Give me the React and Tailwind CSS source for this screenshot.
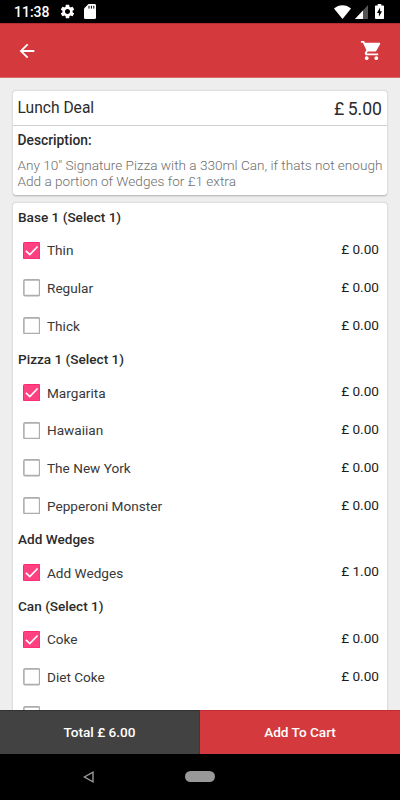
import React, { useState } from 'react';
import { MdArrowBack, MdSettings, MdShoppingCart } from 'react-icons/md';

const groups = [
  { title: 'Base 1 (Select 1)', items: [['Thin', 0], ['Regular', 0], ['Thick', 0]] },
  { title: 'Pizza 1 (Select 1)', items: [['Margarita', 0], ['Hawaiian', 0], ['The New York', 0], ['Pepperoni Monster', 0]] },
  { title: 'Add Wedges', items: [['Add Wedges', 1]] },
  { title: 'Can (Select 1)', items: [['Coke', 0], ['Diet Coke', 0], ['Fanta', 0]] },
];

const StatusBar = () => (
  <div className="h-[23px] shrink-0 bg-black text-white flex items-center pl-[14px] pr-[16px]">
    <span className="w-[45px] text-[14px] leading-none font-medium mt-[1px]">11:38</span>
    <MdSettings className="w-[17px] h-[17px]" />
    <svg className="w-[12px] h-[15px] ml-[8px]" viewBox="0 0 12 15">
      <path fill="white" d="M4.5 0H10.6Q12 0 12 1.4V13.4Q12 15 10.6 15H1.4Q0 15 0 13.4V4.5Z" />
      <path stroke="black" strokeWidth="1" d="M5 1.8V4.6M7.4 1.8V4.6M9.8 1.8V4.6" />
    </svg>
    <div className="ml-auto flex items-center">
      <svg className="w-[17px] h-[14px]" viewBox="0 0 18 14" preserveAspectRatio="none">
        <path fill="white" d="M0 3.5C5-1 13-1 18 3.5L9 14Z" />
      </svg>
      <svg className="w-[13px] h-[14px] ml-[4px] mt-[1px]" viewBox="0 0 13 14">
        <path fill="#555555" d="M13 0V14H0Z" />
        <path fill="white" d="M8 5.4V14H0Z" />
      </svg>
      <svg className="w-[9px] h-[15px] ml-[7px]" viewBox="0 0 9 15">
        <path fill="white" d="M2.7 0H6.3V1.4H8.2Q9 1.4 9 2.3V14.1Q9 15 8.2 15H.8Q0 15 0 14.1V2.3Q0 1.4 .8 1.4H2.7Z" />
        <path fill="black" d="M5.1 3.6V7.2H7L3.9 12.7V9H2Z" />
      </svg>
    </div>
  </div>
);

const Checkbox = ({ checked }) => (
  <svg className="w-[17.5px] h-[17.5px] shrink-0" viewBox="0 0 18 18" fill="none">
    {checked ? (
      <>
        <rect x=".5" y=".5" width="17" height="17" rx="1" fill="#ff4081" stroke="#ff1f73" />
        <path d="M3 9.2L7 13L15 4.6" stroke="white" strokeWidth="1.7" />
      </>
    ) : (
      <rect x=".9" y=".9" width="16.2" height="16.2" rx="1.2" stroke="#adadad" strokeWidth="1.6" />
    )}
  </svg>
);

const App = () => {
  const [selected, setSelected] = useState(['0-0', '1-0', '2-0', '3-0']);

  const toggle = (id) => {
    setSelected((prev) => (prev.includes(id) ? prev.filter((s) => s !== id) : [...prev, id]));
  };

  return (
    <div className="w-[400px] h-[800px] bg-[#eeeeee] flex flex-col overflow-hidden font-['Roboto',sans-serif] text-[#2b2b2b]">
      <StatusBar />

      {/* App bar */}
      <div className="h-[55px] shrink-0 bg-[#d43a3d] border-t border-b border-t-[#b52d31] border-b-[#d96a6c] flex items-center justify-between pl-[16px] pr-[17px] text-white">
        <MdArrowBack className="w-[22px] h-[22px]" />
        <MdShoppingCart className="w-[23px] h-[23px]" />
      </div>

      <div className="flex-1 min-h-0 overflow-hidden px-[13px] pt-[13px]">
        {/* Deal summary */}
        <div className="h-[104px] bg-white rounded-[3px] shadow-[0_0.5px_2px_rgba(0,0,0,0.28)] mb-[8px]">
          <div className="h-[35px] border-b border-[#d0d0d0] flex items-center justify-between pl-[4.5px] pr-[5px]">
            <span className="text-[15.6px] mt-[1px]">Lunch Deal</span>
            <span className="text-[17.6px] mt-[2px] [word-spacing:-1px]">£ 5.00</span>
          </div>
          <div className="pl-[4.5px] pt-[4px]">
            <p className="text-[13.8px] leading-[20px] font-medium">Description:</p>
            <p className="text-[13.6px] leading-[16px] font-light text-[#6e6e6e] mt-[7px] whitespace-nowrap">
              Any 10" Signature Pizza with a 330ml Can, if thats not enough
              <br />
              Add a portion of Wedges for £1 extra
            </p>
          </div>
        </div>

        {/* Options */}
        <div className="bg-white rounded-[3px] shadow-[0_0.5px_2px_rgba(0,0,0,0.28)]">
          {groups.map((group, g) => (
            <div key={group.title}>
              <h3 className="h-[29.2px] flex items-center pb-[1px] pl-[5px] text-[13.6px] font-medium">{group.title}</h3>
              {group.items.map(([name, price], i) => (
                <button
                  key={name}
                  onClick={() => toggle(`${g}-${i}`)}
                  className="w-full h-[37.7px] flex items-center pb-[1.4px] pl-[9.5px] pr-[8px] text-[13.6px] text-left">
                  <Checkbox checked={selected.includes(`${g}-${i}`)} />
                  <span className="ml-[7px] mt-[0.4px] text-[#383838]">{name}</span>
                  <span className="ml-auto -mt-[1.8px] text-[#1c1c1c]">£ {price.toFixed(2)}</span>
                </button>
              ))}
            </div>
          ))}
        </div>
      </div>

      {/* Bottom actions */}
      <div className="h-[44px] shrink-0 flex text-[13.6px] font-medium text-white">
        <div className="w-[200px] bg-[#424242] border-t border-t-[#333333] border-r border-r-[#27403d] flex items-center justify-center pb-[1px]">Total £ 6.00</div>
        <button className="flex-1 bg-[#d43a3d] border-t border-[#c52a2e] flex items-center justify-center pb-[1px]">Add To Cart</button>
      </div>

      {/* Navigation bar */}
      <div className="h-[46px] shrink-0 bg-black flex items-center pl-[83px] pb-[1px]">
        <svg className="w-[11px] h-[12px]" viewBox="0 0 11 12">
          <path d="M10 1.2V10.8L1.4 6Z" fill="none" stroke="#999999" strokeWidth="1.4" />
        </svg>
        <div className="w-[30px] h-[11px] rounded-full bg-[#999999] ml-[91px]" />
      </div>
    </div>
  );
};

export default App;
